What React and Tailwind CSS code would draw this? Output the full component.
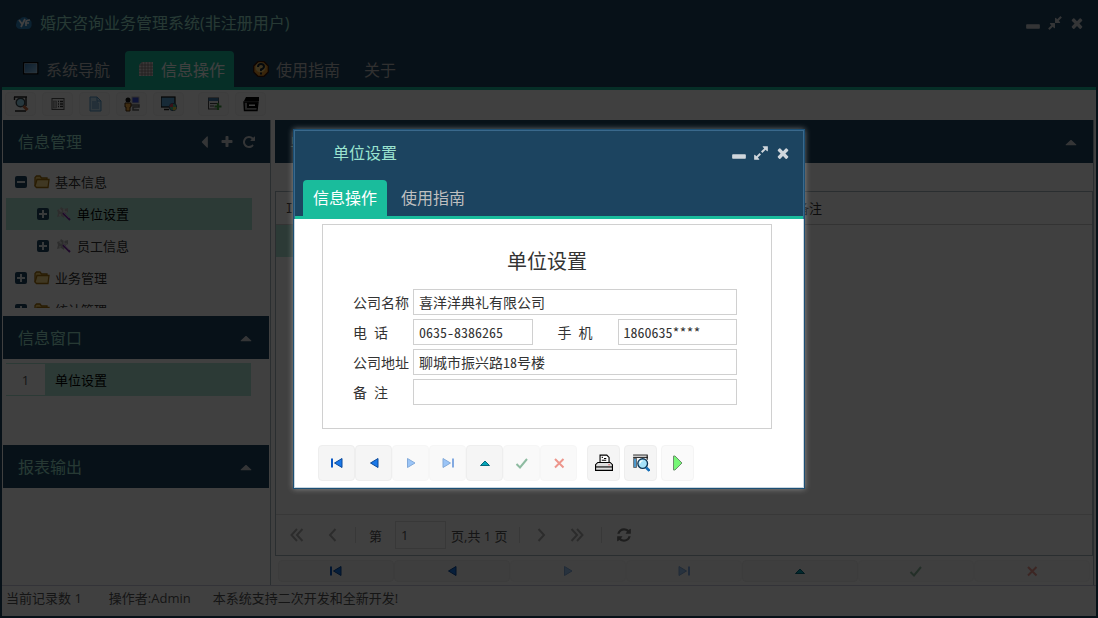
import React from "react";

const PATHS = {
  close: "M1490 1322q0 40-28 68l-136 136q-28 28-68 28t-68-28l-294-294-294 294q-28 28-68 28t-68-28l-136-136q-28-28-28-68t28-68l294-294-294-294q-28-28-28-68t28-68l136-136q28-28 68-28t68 28l294 294 294-294q28-28 68-28t68 28l136 136q28 28 28 68t-28 68l-294 294 294 294q28 28 28 68z",
  plus: "M1600 736v192q0 40-28 68t-68 28h-416v416q0 40-28 68t-68 28h-192q-40 0-68-28t-28-68v-416h-416q-40 0-68-28t-28-68v-192q0-40 28-68t68-28h416v-416q0-40 28-68t68-28h192q40 0 68 28t28 68v416h416q40 0 68 28t28 68z",
  minus: "M1664 1120v320q0 40-28 68t-68 28h-1344q-40 0-68-28t-28-68v-320q0-40 28-68t68-28h1344q40 0 68 28t28 68z",
  repeat: "M1664 256v448q0 26-19 45t-45 19h-448q-42 0-59-40-17-39 14-69l138-138q-148-137-349-137-104 0-198.500 40.500t-163.500 109.500-109.500 163.500-40.500 198.500 40.500 198.500 109.500 163.500 163.500 109.500 198.500 40.500q119 0 225-52t179-147q7-10 23-12 15 0 25 9l137 138q9 8 9.500 20.500t-7.500 22.500q-109 132-264 204.500t-327 72.500q-156 0-298-61t-245-164-164-245-61-298 61-298 164-245 245-164 298-61q147 0 284.500 55.500t244.500 156.500l130-129q29-31 70-14 39 17 39 59z",
  refresh: "M1639 1056q0 5-1 7-64 268-268 434.500t-478 166.500q-146 0-282.500-55t-243.500-157l-129 129q-19 19-45 19t-45-19-19-45v-448q0-26 19-45t45-19h448q26 0 45 19t19 45-19 45l-137 137q71 66 161 102t187 36q134 0 250-65t186-179q11-17 53-117 8-23 30-23h192q13 0 22.500 9.500t9.500 22.500zm25-800v448q0 26-19 45t-45 19h-448q-26 0-45-19t-19-45 19-45l138-138q-148-137-349-137-134 0-250 65t-186 179q-11 17-53 117-8 23-30 23h-199q-13 0-22.500-9.500t-9.500-22.500v-7q65-268 270-434.500t480-166.500q146 0 284 55.500t245 156.500l130-129q19-19 45-19t45 19 19 45z",
  expand: "M883 1056q0 13-10 23l-332 332 144 144q19 19 19 45t-19 45-45 19h-448q-26 0-45-19t-19-45v-448q0-26 19-45t45-19 45 19l144 144 332-332q10-10 23-10t23 10l114 114q10 10 10 23zm781-864v448q0 26-19 45t-45 19-45-19l-144-144-332 332q-10 10-23 10t-23-10l-114-114q-10-10-10-23t10-23l332-332-144-144q-19-19-19-45t19-45 45-19h448q26 0 45 19t19 45z",
  compress: "M896 960v448q0 26-19 45t-45 19-45-19l-144-144-332 332q-10 10-23 10t-23-10l-114-114q-10-10-10-23t10-23l332-332-144-144q-19-19-19-45t19-45 45-19h448q26 0 45 19t19 45zm755-672q0 13-10 23l-332 332 144 144q19 19 19 45t-19 45-45 19h-448q-26 0-45-19t-19-45v-448q0-26 19-45t45-19 45 19l144 144 332-332q10-10 23-10t23 10l114 114q10 10 10 23z",
  up: "M1500 1216q0 32-24 32H316q-24 0-24-32q0-18 19-37l540-500q19-19 45-19t45 19l540 500q19 19 19 37z",
  left: "M1216 320v1152q0 26-19 45t-45 19-45-19L560 941q-19-19-19-45t19-45l547-576q19-19 45-19t45 19 19 45z",
};

function Glyph({ name, className = "size-4" }) {
  return (
    <svg viewBox="0 0 1792 1792" fill="currentColor" className={className} aria-hidden="true">
      <path d={PATHS[name]} />
    </svg>
  );
}

function IconButton({ label, name, className }) {
  return (
    <button type="button" aria-label={label} className="flex w-[22px] items-center justify-center">
      <Glyph name={name} className={className} />
    </button>
  );
}

function Pic({ children, className = "size-4" }) {
  return (
    <svg viewBox="0 0 16 16" className={className} aria-hidden="true">
      {children}
    </svg>
  );
}

const Logo = () => (
  <Pic>
    <path d="M4 14a4 4 0 0 1-3.500-6A4 4 0 0 1 4 4a5 5 0 0 1 8 0 4 4 0 0 1 3.500 5 4 4 0 0 1-4 5z" fill="#2d86c4" />
    <path d="M3 5l3 4M9 4l-4 8M10 11V7q0-2 4-2M9 8h4" stroke="#fff" strokeWidth="1.700" fill="none" />
  </Pic>
);
const Monitor = () => (
  <Pic>
    <defs>
      <linearGradient id="screen" x2="1" y2="1">
        <stop offset="0" stopColor="#2f78b8" />
        <stop offset="1" stopColor="#9cd0f4" />
      </linearGradient>
    </defs>
    <rect x=".7" y="1.700" width="14" height="11" fill="url(#screen)" stroke="#050505" strokeWidth="1.400" />
    <path d="M1.500 2.500h12.500v9.500h-12.500z" stroke="#d6e8f4" fill="none" opacity=".5" />
  </Pic>
);
const Grid = () => (
  <Pic>
    <path d="M4 1h11v14H1V4z" fill="#e6dcdc" />
    <path d="M4 1v14M7 1v14M10 1v14M13 1v14M1 4h14M1 7h14M1 10h14M1 13h14" stroke="#7d7474" strokeWidth=".8" />
  </Pic>
);
const Help = () => (
  <Pic>
    <path d="M5 .7h6L15.300 5v6L11 15.300H5L.7 11V5z" fill="#e8992c" stroke="#3a160a" strokeWidth="1.300" />
    <circle cx="7.500" cy="6.500" r="5" fill="#ffeaa0" opacity=".7" />
    <path d="M5 6q0-3 3-3t3 2.500q0 2-3 3V10M8 11.500v2" stroke="#142433" strokeWidth="2" fill="none" />
  </Pic>
);
const SearchDoc = () => (
  <Pic>
    <path d="M1 1h13M1.500 1v3M13 1v9M2 15h11" stroke="#222" strokeWidth="1.400" fill="none" />
    <circle cx="7.500" cy="6.500" r="4.300" fill="#9bdcf2" stroke="#39464c" strokeWidth="1.400" />
    <path d="M10.500 10l4 4" stroke="#c5683c" strokeWidth="3" />
  </Pic>
);
const ListDoc = () => (
  <Pic>
    <rect x="2" y="2.500" width="12" height="11" fill="#f4f4f4" stroke="#555" />
    <rect x="3.500" y="5" width="3" height="7" fill="#b9b9b9" stroke="#777" strokeWidth=".6" />
    <path d="M8 5.500h1m1 0h3M8 8h1m1 0h3M8 10.500h1m1 0h3" stroke="#333" strokeWidth="1.300" />
  </Pic>
);
const Doc = () => (
  <Pic>
    <path d="M3 1h7l4 4v10H3z" fill="#c0e1f8" stroke="#5799c8" />
    <path d="M10 1v4h4M5 6h6M5 8h7M5 10h7M5 12h7" stroke="#5799c8" fill="none" />
  </Pic>
);
const User = () => (
  <Pic>
    <rect x="8" y="1" width="7" height="6" fill="#3a4fe0" stroke="#bbb" />
    <path d="M7 9h8v2H9v3h6" stroke="#666" strokeWidth="1.500" fill="#ddd" />
    <circle cx="4" cy="4" r="2.500" fill="#111" />
    <path d="M1 7h6v4H6v4H2v-4H1z" fill="#f2ad45" stroke="#4d2c0a" />
  </Pic>
);
const Globe = () => (
  <Pic>
    <rect x="0" y="1" width="14" height="10" fill="#5da9db" stroke="#111" strokeWidth="1.200" />
    <path d="M3 13.500h5" stroke="#222" strokeWidth="1.500" />
    <circle cx="12" cy="11" r="3.700" fill="#4fc08c" stroke="#30537a" />
    <path d="M12 11V7.500a3.500 3.500 0 0 0-3.500 3.500z" fill="#e0495c" />
    <path d="M12 11v3.500a3.500 3.500 0 0 0 3.500-3.500z" fill="#e6c745" />
  </Pic>
);
const AddTable = () => (
  <Pic>
    <rect x="2.500" y="2" width="10" height="11" fill="#f4f4f4" stroke="#444" />
    <rect x="2.500" y="2" width="10" height="3" fill="#427baa" />
    <path d="M4 7.500h7M4 10h4" stroke="#444" />
    <path d="M12 7v7M8.500 10.500h7" stroke="#3c9c3c" strokeWidth="2.200" />
  </Pic>
);
const Register = () => (
  <Pic>
    <path d="M3 1h13v4H1z" fill="#000" />
    <path d="M1 6h14l-1 8.500H1.500z" fill="#999" stroke="#000" strokeWidth="1.400" />
    <path d="M5 7.500h8v3.500H5z" fill="#fff" stroke="#000" strokeWidth="2" />
  </Pic>
);
const Folder = () => (
  <svg viewBox="0 0 16 14" className="h-[14px] w-4" aria-hidden="true">
    <path d="M1 11V2.500L2.500 1H6l1.500 2H13v2" fill="#f7d16c" stroke="#a3700f" strokeWidth="1.300" />
    <path d="M3 4.500h12l-1 8H2.500L1 11z" fill="#ffe08a" stroke="#a3700f" strokeWidth="1.300" />
  </svg>
);
const Wand = () => (
  <Pic>
    <path d="M5 1l3 2 4-1v4l-3 2-1 4-3-2-4 1 1-4-1-3 3-1z" fill="#b5b5b5" />
    <path d="M3 4h2v2M8 3v3h3M3 9h2" stroke="#eee" fill="none" />
    <path d="M7 7l7 7" stroke="#7b2ba8" strokeWidth="2" />
    <path d="M7 6l6 6" stroke="#dcb2ef" strokeWidth=".8" />
  </Pic>
);

const NAV = [
  { label: "首记录", on: true, art: <><path d="M3 3.500v9" stroke="#0a58c4" strokeWidth="2" /><path d="M13 3.500v9L5.500 8z" fill="#1a78e8" stroke="#0a4a9c" /></> },
  { label: "上一条", on: true, art: <path d="M12 3.500v9L4.500 8z" fill="#1a78e8" stroke="#0a4a9c" /> },
  { label: "下一条", on: false, art: <path d="M4.500 3.500v9L12 8z" fill="#3a8df0" stroke="#0a58b4" /> },
  { label: "末记录", on: false, art: <><path d="M13 3.500v9" stroke="#0a58c4" strokeWidth="2" /><path d="M3 3.500v9L10.500 8z" fill="#3a8df0" stroke="#0a58b4" /></> },
  { label: "编辑", on: true, art: <path d="M3.500 10.500h9L8 6z" fill="#05a5b8" stroke="#05697c" /> },
  { label: "保存", on: false, art: <path d="M2.500 9l3.500 3.500L13 4" stroke="#1f7a45" strokeWidth="2" fill="none" /> },
  { label: "取消", on: false, art: <path d="M4 4l8.500 8.500M12.500 4L4 12.500" stroke="#dc2f1c" strokeWidth="2" fill="none" /> },
];

function RecordNav({ size, grow }) {
  return (
    <div className={grow ? "flex flex-1" : "flex"}>
      {NAV.map((n) => (
        <button
          key={n.label}
          type="button"
          aria-label={n.label}
          className={`flex items-center justify-center rounded border border-[#eeeeee] bg-[#f5f5f5] ${size} ${n.on ? "" : "opacity-50"}`}
        >
          <Pic>{n.art}</Pic>
        </button>
      ))}
    </div>
  );
}

function PanelHead({ title, pad = "pr-[11px]", children }) {
  return (
    <div className={`flex h-[43px] shrink-0 items-center bg-[#1c4460] pl-[15px] text-base text-[#9be4d0] ${pad}`}>
      <h2 className="flex-1">{title}</h2>
      <div className="flex text-[#cfd4d8]">{children}</div>
    </div>
  );
}

function Toggle({ open }) {
  return (
    <button type="button" aria-label={open ? "收起" : "展开"} className="flex size-3 items-center justify-center rounded-xs bg-[#1c4460]">
      <svg viewBox="0 0 12 12" className="size-3" stroke="#dfe6ea" strokeWidth="2" aria-hidden="true">
        <path d={open ? "M2 6h8" : "M2 6h8M6 2v8"} />
      </svg>
    </button>
  );
}

const TREE = [
  { name: "基本信息", open: true },
  { name: "单位设置", leaf: true, selected: true },
  { name: "员工信息", leaf: true },
  { name: "业务管理" },
  { name: "统计管理" },
];

function Sidebar() {
  return (
    <aside className="flex w-[268px] shrink-0 flex-col border-r border-[#a9b7c0]">
      <PanelHead title="信息管理" pad="pr-[10px]">
        <IconButton label="收起面板" name="left" className="size-4" />
        <IconButton label="新增" name="plus" className="size-[14px]" />
        <IconButton label="刷新" name="repeat" className="size-[14px]" />
      </PanelHead>
      <ul className="h-[153px] shrink-0 overflow-hidden border-b-8 border-white pt-[3px] pr-[18px] pl-[3px]">
        {TREE.map((t) => (
          <li
            key={t.name}
            className={`flex h-8 items-center text-[13px] ${t.leaf ? "pl-[31px]" : "pl-[9px]"} ${t.selected ? "bg-[#b0e8d8] text-black" : "text-[#333]"}`}
          >
            <Toggle open={t.open} />
            <span className="mr-[5px] ml-[7px] flex w-4">{t.leaf ? <Wand /> : <Folder />}</span>
            <span className="pt-0.5">{t.name}</span>
          </li>
        ))}
      </ul>
      <div className="mr-px">
        <PanelHead title="信息窗口" pad="pr-[12px]">
          <IconButton label="折叠" name="up" className="size-4" />
        </PanelHead>
      </div>
      <ol className="h-[86px] shrink-0 pt-[4px] pr-[19px] pl-[3px]">
        <li className="flex h-[33px] items-center border-y border-[#b0e8d8] bg-[#b0e8d8] text-[13px] text-black">
          <span className="flex h-full w-[39px] items-center justify-center bg-white pt-0.5 text-[#555]">1</span>
          <span className="pt-0.5 pl-[10px]">单位设置</span>
        </li>
      </ol>
      <div className="mr-px">
        <PanelHead title="报表输出" pad="pr-[12px]">
          <IconButton label="折叠" name="up" className="size-4" />
        </PanelHead>
      </div>
      <div className="flex-1" />
    </aside>
  );
}

function Chevron({ label, d }) {
  return (
    <button type="button" aria-label={label} className="flex w-[36px] items-center justify-center">
      <svg viewBox="0 0 16 16" className="size-4" fill="none" stroke="#b0b0b0" strokeWidth="2" aria-hidden="true">
        <path d={d} />
      </svg>
    </button>
  );
}

function MainPanel() {
  return (
    <main className="flex min-w-0 flex-1 flex-col border-r border-[#a9b7c0]">
      <PanelHead title="单位设置">
        <IconButton label="折叠" name="up" className="size-4" />
      </PanelHead>
      <div className="h-7" />
      <div className="flex flex-1 flex-col border border-[#a9b7c0]">
        <div className="flex-1">
          <table className="w-full table-fixed border-collapse font-['Noto_Sans_Mono_CJK_SC','Noto_Sans_CJK_SC',sans-serif] text-[13px] text-[#333]">
            <thead>
              <tr className="h-8 border-b border-[#ccc] text-left">
                <th className="w-[510px] pl-[10px] font-normal">ID</th>
                <th className="pl-[10px] font-normal">备注</th>
              </tr>
            </thead>
            <tbody>
              <tr className="h-[33px]">
                <td className="bg-[#b0e8d8]" />
                <td />
              </tr>
            </tbody>
          </table>
        </div>
        <div className="flex h-[41px] items-center border-t border-[#ddd] pl-[3px] text-[13px] text-[#555]">
          <Chevron label="第一页" d="M8 2L2.500 8 8 14M13.500 2L8 8l5.500 6" />
          <Chevron label="上一页" d="M10.500 2L5 8l5.500 6" />
          <span className="ml-[4px] h-4 border-l border-[#ddd]" />
          <label htmlFor="page" className="px-[13px] pt-1">第</label>
          <input id="page" defaultValue="1" className="h-7 w-[51px] border border-[#ddd] px-[5px]" />
          <span className="pt-1 pr-[11px] pl-[5px]">页,共 1 页</span>
          <span className="h-4 border-l border-[#ddd]" />
          <span className="flex pr-[6px] pl-[3px]">
            <Chevron label="下一页" d="M5.500 2L11 8l-5.500 6" />
            <Chevron label="末页" d="M2.500 2L8 8l-5.500 6M8 2l5.500 6L8 14" />
          </span>
          <span className="h-4 border-l border-[#ddd]" />
          <button type="button" aria-label="刷新" className="ml-[14px] text-[#777]">
            <Glyph name="refresh" className="size-4" />
          </button>
        </div>
      </div>
      <div className="flex h-[29px] items-center px-[3px]">
        <RecordNav grow size="h-[22px] flex-1" />
      </div>
    </main>
  );
}

const FIELD = "h-[26px] min-w-0 border border-[#d0d0d0] bg-white px-[5px] text-sm text-[#333]";

function Dialog() {
  return (
    <section
      role="dialog"
      aria-label="单位设置"
      className="flex h-[360px] w-[512px] flex-col border border-[#1c4f74] bg-white shadow-[0_0_6px_rgba(255,255,255,0.4)]"
    >
      <header className="flex flex-col border-x border-t border-[#3a698c] bg-[#1c4460]">
        <div className="flex h-[43px] items-center pr-[9px] pl-[38px]">
          <h2 className="flex-1 text-base text-[#9be4d0]">单位设置</h2>
          <div className="flex text-[#cfd6dc]">
            <IconButton label="最小化" name="minus" className="size-4" />
            <IconButton label="最大化" name="expand" className="size-4" />
            <IconButton label="关闭" name="close" className="size-4" />
          </div>
        </div>
        <nav className="flex border-b-3 border-[#1abc9c] px-2 pt-[6px] text-base">
          <a href="#ops" className="flex h-9 items-center rounded-t bg-[#1abc9c] px-[10px] text-white">信息操作</a>
          <a href="#guide" className="flex h-9 items-center px-[14px] text-[#bfbfbf]">使用指南</a>
        </nav>
      </header>
      <div className="flex-1 border-x border-b border-[#c9d6df] pt-[5px]">
        <form className="mr-[31px] ml-[27px] h-[205px] border border-[#d0d0d0] pr-[34px] pl-[30px] font-['Noto_Sans_Mono_CJK_SC','Noto_Sans_CJK_SC',sans-serif] text-sm text-[#333]">
          <h3 className="flex h-16 items-center justify-center pt-[8px] pl-1 text-xl">单位设置</h3>
          <div className="grid grid-cols-[60px_1fr_85px_1fr] items-center gap-y-1">
            <label htmlFor="name">公司名称</label>
            <input id="name" defaultValue="喜洋洋典礼有限公司" className={`${FIELD} col-span-3`} />
            <label htmlFor="tel">电 话</label>
            <input id="tel" defaultValue="0635-8386265" className={FIELD} />
            <label htmlFor="mobile" className="pl-[25px]">手 机</label>
            <input id="mobile" defaultValue="1860635****" className={FIELD} />
            <label htmlFor="addr">公司地址</label>
            <input id="addr" defaultValue="聊城市振兴路18号楼" className={`${FIELD} col-span-3`} />
            <label htmlFor="note">备 注</label>
            <input id="note" className={`${FIELD} col-span-3`} />
          </div>
        </form>
        <div className="mt-4 flex pl-[23px]">
          <RecordNav size="h-9 w-[37px]" />
          <div className="ml-[10px] flex gap-1">
            <button type="button" aria-label="打印" className="flex h-9 w-[33px] items-center justify-center rounded border border-[#eeeeee] bg-[#f5f5f5]">
              <Pic className="size-[18px]">
                <path d="M4.500 8V1h6l2 2v5" fill="#fff" stroke="#000" />
                <path d="M6 3h1m1 1h2M6 5.500h4" stroke="#000" />
                <path d="M2.500 7.500h11l2 2v5H.5v-5z" fill="#ddd" stroke="#000" />
                <path d="M.5 11.500h15" stroke="#000" />
                <path d="M12 9.500h1" stroke="#d22" />
              </Pic>
            </button>
            <button type="button" aria-label="预览" className="flex h-9 w-[33px] items-center justify-center rounded border border-[#eeeeee] bg-[#f5f5f5]">
              <Pic className="size-[18px]">
                <path d="M1 1h13M1 3h13" stroke="#333" />
                <path d="M1 2h13" stroke="#ccc" />
                <rect x="1.500" y="4" width="2.500" height="8" fill="#4d9bd0" stroke="#555" strokeWidth=".7" />
                <path d="M13.500 1v4" stroke="#111" />
                <circle cx="9.500" cy="8.500" r="4.300" fill="#a5e2fa" stroke="#0c3555" strokeWidth="1.200" />
                <path d="M7 8.500q0-2.500 2.500-2.500" stroke="#fff" fill="none" />
                <path d="M12.500 12l3 3" stroke="#156fb8" strokeWidth="2.300" />
              </Pic>
            </button>
            <button type="button" aria-label="执行" className="flex h-9 w-[33px] items-center justify-center rounded border border-[#f4f4f4] bg-[#fafafa]">
              <Pic>
                <path d="M3.500 1v14h1.500L12 8 5 1z" fill="#76f776" stroke="#6c8f6c" />
              </Pic>
            </button>
          </div>
        </div>
      </div>
    </section>
  );
}

const TABS = [
  { name: "系统导航", icon: <Monitor /> },
  { name: "信息操作", icon: <Grid />, active: true },
  { name: "使用指南", icon: <Help /> },
  { name: "关于" },
];

const TOOLS = [
  { name: "查询", icon: <SearchDoc /> },
  { name: "列表", icon: <ListDoc /> },
  { name: "文档", icon: <Doc /> },
  { name: "用户", icon: <User /> },
  { name: "网络", icon: <Globe /> },
  { name: "新增表", icon: <AddTable />, apart: true },
  { name: "收银", icon: <Register /> },
];

export default function App() {
  return (
    <div className="relative h-screen overflow-hidden font-['Open_Sans','Noto_Sans_CJK_SC',sans-serif]">
      <div className="flex h-full flex-col border-2 border-[#1c4460] bg-white">
        <header className="bg-[#1c4460]">
          <div className="flex h-[42px] items-center pr-2 pl-[14px]">
            <Logo />
            <h1 className="flex-1 pl-2 text-base text-[#9be4d0]">婚庆咨询业务管理系统(非注册用户)</h1>
            <div className="flex text-[#cfd4d8]">
              <IconButton label="最小化" name="minus" className="size-4" />
              <IconButton label="还原" name="compress" className="size-4" />
              <IconButton label="关闭" name="close" className="size-4" />
            </div>
          </div>
          <nav className="flex gap-[6px] border-b-3 border-[#1abc9c] px-2 pt-[7px] text-base">
            {TABS.map((t) => (
              <a
                key={t.name}
                href="#tab"
                className={`flex h-9 items-center gap-[7px] rounded-t pr-[9px] ${t.icon ? "pl-[13px]" : "pl-[9px]"} ${t.active ? "bg-[#1abc9c] text-white" : "text-[#bfbfbf]"}`}
              >
                {t.icon}
                <span className="pt-0.5">{t.name}</span>
              </a>
            ))}
          </nav>
        </header>
        <div className="flex h-[30px] shrink-0 items-center gap-[6px] bg-white px-[3px] pb-0.5">
          {TOOLS.map((t) => (
            <button
              key={t.name}
              type="button"
              aria-label={t.name}
              className={`flex h-6 w-[31px] items-center justify-center rounded border border-[#f2f2f2] bg-[#fafafa] ${t.apart ? "ml-2" : ""}`}
            >
              {t.icon}
            </button>
          ))}
        </div>
        <div className="flex min-h-0 flex-1 gap-1 pr-[2px] pl-px">
          <Sidebar />
          <MainPanel />
        </div>
        <footer className="flex h-[31px] shrink-0 items-center border-t border-[#ccd] px-1 pb-[5px] text-[13px] text-[#555]">
          <span className="pr-[27px]">当前记录数 1</span>
          <span className="pr-[22px]">操作者:Admin</span>
          <span>本系统支持二次开发和全新开发!</span>
        </footer>
      </div>
      <div className="absolute inset-0 flex items-center justify-center bg-black/75">
        <Dialog />
      </div>
    </div>
  );
}
